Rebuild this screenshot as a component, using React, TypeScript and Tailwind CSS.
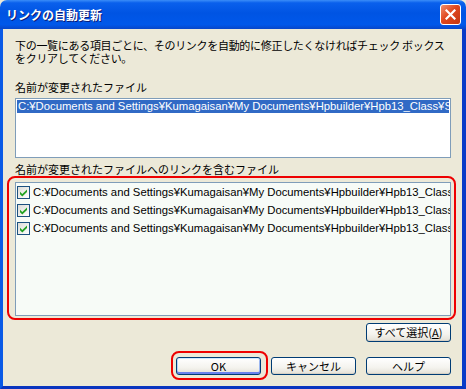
import React from "react";

const PATH = "C:¥Documents and Settings¥Kumagaisan¥My Documents¥Hpbuilder¥Hpb13_Class¥S";

function XpButton({ children, isDefault = false, className = "" }: { children: React.ReactNode; isDefault?: boolean; className?: string }) {
  return (
    <div
      className={
        "w-[85px] flex items-center justify-center rounded-[3px] border border-[#003c74] text-[11px] text-black bg-[linear-gradient(to_bottom,#ffffff,#f4f3ee_60%,#e3e0d6)] " +
        (isDefault
          ? "shadow-[inset_0_1px_0_#cee7ff,inset_0_-2px_0_#6982ee,inset_1px_0_0_#b8d3f9,inset_-1px_0_0_#9cb7f0] "
          : "shadow-[inset_0_-1px_0_#d6d0c5] ") +
        className
      }
    >
      {children}
    </div>
  );
}

function CheckBox() {
  return (
    <div className="w-[13px] h-[13px] shrink-0 border border-[#1c5180] bg-[linear-gradient(135deg,#dcdcd7,#ffffff)] flex items-center justify-center">
      <svg width="9" height="9" viewBox="0 0 9 9">
        <path d="M1 3.8 L3.3 6.1 L8 1.4 L8 3.9 L3.3 8.6 L1 6.3 Z" fill="#21a121" />
      </svg>
    </div>
  );
}

export default function App() {
  return (
    <div className="w-[466px] h-[389px] relative flex flex-col bg-[#ece9d8] font-['Noto_Sans_CJK_JP',sans-serif] overflow-hidden">
      {/* Title bar */}
      <div className="h-[29px] shrink-0 rounded-t-[7px] flex items-center justify-between pl-[6px] pr-[5px] bg-[linear-gradient(to_bottom,#3b8df8_0%,#0a60ec_10%,#0054e3_45%,#0058ea_85%,#0846c8_100%)]">
        <span className="text-white font-bold text-[12px] leading-none [text-shadow:1px_1px_0_#0a1b78]">
          リンクの自動更新
        </span>
        <div className="w-[21px] h-[21px] rounded-[3px] border border-white bg-[linear-gradient(135deg,#f08f6f,#e0471e_45%,#c23510)] flex items-center justify-center">
          <svg width="11" height="11" viewBox="0 0 11 11">
            <path d="M1.5 1.5 L9.5 9.5 M9.5 1.5 L1.5 9.5" stroke="#ffffff" strokeWidth="2.2" strokeLinecap="square" />
          </svg>
        </div>
      </div>

      {/* Body */}
      <div className="flex-1 flex flex-col border-l-[3px] border-r-[4px] border-b-[3px] border-l-[#0a5ae6] border-r-[#0a3bc8] border-b-[#0a35bf] pl-[12px] pr-[11px] pt-[10px]">
        <p className="text-[11px] leading-[13px] text-black whitespace-nowrap tracking-[-0.3px]">
          下の一覧にある項目ごとに、そのリンクを自動的に修正したくなければチェック ボックス
          <br />
          をクリアしてください。
        </p>

        <div className="mt-[16px] text-[11px] leading-[13px] text-black">名前が変更されたファイル</div>
        <div className="mt-[4px] h-[60px] border border-[#7f9db9] bg-white p-px overflow-hidden">
          <div className="h-[13px] bg-[#316ac5] text-white text-[11.3px] leading-[13px] whitespace-nowrap overflow-hidden pl-px font-['Liberation_Sans','Noto_Sans_CJK_JP',sans-serif]">
            {PATH}
          </div>
        </div>

        <div className="mt-[5px] text-[11px] leading-[13px] text-black">名前が変更されたファイルへのリンクを含むファイル</div>
        <div className="mt-[6px] h-[134px] border border-[#7f9db9] bg-[#f7fbf7] overflow-hidden">
          {[0, 1, 2].map((i) => (
            <div key={i} className="h-[18px] flex items-center pl-px gap-[3px]">
              <CheckBox />
              <span className="text-[11.3px] text-black whitespace-nowrap font-['Liberation_Sans','Noto_Sans_CJK_JP',sans-serif]">
                {PATH}
              </span>
            </div>
          ))}
        </div>

        <div className="mt-[7px] flex justify-end">
          <XpButton className="h-[19px]">
            すべて選択(<span className="underline">A</span>)
          </XpButton>
        </div>

        <div className="mt-[15px] flex justify-end gap-[10px]">
          <XpButton isDefault className="h-[18px]">OK</XpButton>
          <XpButton className="h-[18px]">キャンセル</XpButton>
          <XpButton className="h-[18px]">ヘルプ</XpButton>
        </div>
      </div>

      {/* Red annotation marks */}
      <div className="absolute left-[7px] top-[176px] w-[449px] h-[144px] border-2 border-[#ee0000] rounded-[8px] pointer-events-none" />
      <div className="absolute left-[171px] top-[351px] w-[97px] h-[29px] border-2 border-[#ee0000] rounded-[8px] pointer-events-none" />
    </div>
  );
}
